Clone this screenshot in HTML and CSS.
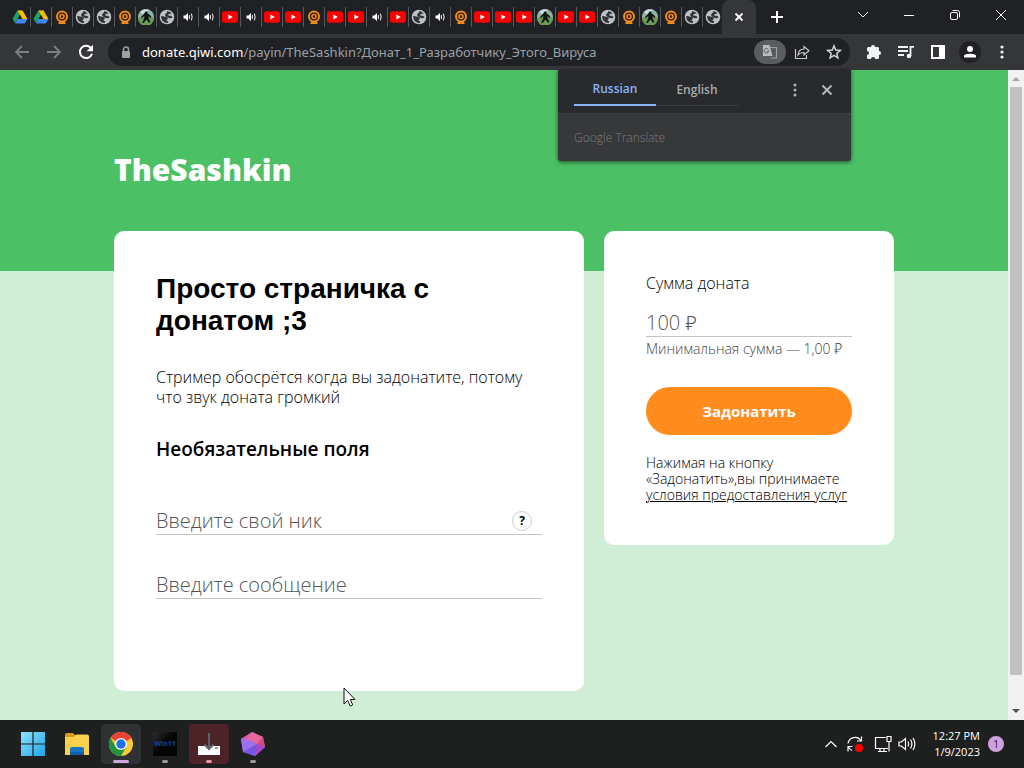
FILE: index.html
```html
<!DOCTYPE html>
<html lang="ru">
<head>
    <meta charset="UTF-8">
    <meta name="viewport" content="width=device-width, initial-scale=1.0">
    <title>TheSashkin</title>
    <link rel="stylesheet" href="styles.css">
</head>
<body>
    <!-- favicons used by the tabs -->
    <svg class="sprite" aria-hidden="true">
        <symbol id="drive" viewBox="0 0 16 16">
            <path d="M5.4 1.5h5.2L8 6z" fill="#188038"/>
            <path d="M5.4 1.5 8 6 3.2 14.2.5 9.8z" fill="#1ea362"/>
            <path d="M10.6 1.5 15.5 10h-5.2L5.4 1.5z" fill="#fbbc04"/>
            <path d="M5.6 10h9.9l-2.7 4.4H3.2z" fill="#4285f4"/>
            <path d="M8 6l2.3 4H5.6z" fill="#202124"/>
        </symbol>
        <symbol id="orange" viewBox="0 0 16 16">
            <path d="M5 12h6l.7 3H4.300z" fill="#ef8a1d"/>
            <circle cx="8" cy="7.5" r="5" fill="#2b1a0c" stroke="#ef8a1d" stroke-width="2"/>
            <circle cx="8" cy="7.5" r="2" fill="none" stroke="#ef8a1d" stroke-width="1.6"/>
        </symbol>
        <symbol id="globe" viewBox="0 0 16 16">
            <circle cx="8" cy="8" r="7.300" fill="#bdc1c6"/>
            <path d="M2.200 7c2.300-.2 3.300.8 5 1 2 .2 2.300 1.500.8 2.400-1 .6 0 1.800 1.200 1.800l-.4 1.800C5 14.300 2 11 2.200 7z" fill="#303236"/>
            <path d="M8 2.300c1.800-.2 3.800.8 4.900 2.400-1.700-.4-2 .7-3.300.6-1 0-.6 1.400.6 1.500 1.300 0 2.600.1 3.500 1.500-1.600 1.300-3.900 1.200-4.800-.1-1-.2-2.600-.5-2.700-1.800C6.100 5 6.800 4 8 3.700z" fill="#303236"/>
        </symbol>
        <symbol id="game" viewBox="0 0 16 16">
            <circle cx="8" cy="8" r="8" fill="#8fb3a4"/>
            <path d="M0 9c3-1 12-2 16 0a8 8 0 0 1-16 0z" fill="#6d9a58"/>
            <path d="M2 3a8 8 0 0 1 9-2L6 6z" fill="#c9dde0"/>
            <path d="M7.500 2.500h2v2L12 6l1.500 2.500-1 .5-2-2 .2 2.500 1.800 4h-1.800L8.500 10.500 5.500 14H4l2.200-4.500V7L4 9 3 8l3-3.200z" fill="#101612"/>
        </symbol>
        <symbol id="sound" viewBox="0 0 16 16">
            <path d="M2 6h2.500L8 2.500v11L4.500 10H2z" fill="#fff"/>
            <path d="M9.800 5.500v5M12.500 3.500q2 4.500 0 9" fill="none" stroke="#fff" stroke-width="1.300"/>
        </symbol>
        <symbol id="youtube" viewBox="0 0 16 16">
            <rect x="0" y="2.200" width="16" height="11.600" rx="2.500" fill="#f00"/>
            <path d="M6.400 5.500v5L10.800 8z" fill="#fff"/>
        </symbol>
    </svg>

    <div class="tabstrip">
        <div class="tabs" id="tabs"></div>
        <button class="tab-active" aria-label="Close tab">
            <svg width="10" height="10" viewBox="0 0 10 10"><path d="M1.500 1.500l7 7M8.500 1.500l-7 7" stroke="#fff" stroke-width="1.800"/></svg>
        </button>
        <button class="tab-new" aria-label="New tab">
            <svg width="14" height="14" viewBox="0 0 14 14"><path d="M7 1v12M1 7h12" stroke="#fff" stroke-width="2"/></svg>
        </button>
        <div class="window-buttons">
            <button aria-label="Search tabs"><svg width="12" height="12" viewBox="0 0 12 12"><path d="M1 3l5 5 5-5"/></svg></button>
            <button aria-label="Minimize"><svg width="12" height="12" viewBox="0 0 12 12"><path d="M1 6.500h10"/></svg></button>
            <button aria-label="Restore"><svg width="12" height="12" viewBox="0 0 12 12"><rect x="1.500" y="3.500" width="7" height="7" rx="1.500"/><path d="M3.500 1.500H8.500a2 2 0 0 1 2 2v5"/></svg></button>
            <button aria-label="Close"><svg width="12" height="12" viewBox="0 0 12 12"><path d="M1 1l10 10M11 1L1 11"/></svg></button>
        </div>
    </div>

    <div class="toolbar">
        <button class="tool" aria-label="Back"><svg width="16" height="16" viewBox="0 0 16 16"><path d="M15 8H2M8 2L2 8l6 6" fill="none" stroke="#7c7e82" stroke-width="1.800"/></svg></button>
        <button class="tool" aria-label="Forward"><svg width="16" height="16" viewBox="0 0 16 16"><path d="M1 8h13M8 2l6 6-6 6" fill="none" stroke="#7c7e82" stroke-width="1.800"/></svg></button>
        <button class="tool" aria-label="Reload"><svg width="16" height="16" viewBox="0 0 16 16"><path d="M13.300 4.500A6.200 6.200 0 1 0 14 9.800" fill="none" stroke="#fff" stroke-width="2"/><path d="M15 .8v6.400H8.600z" fill="#fff"/></svg></button>
        <div class="omnibox">
            <svg class="lock" width="10" height="13" viewBox="0 0 10 13"><path d="M2.500 5V3.500a2.500 2.500 0 0 1 5 0V5" fill="none" stroke="#9aa0a6" stroke-width="1.500"/><rect x="1" y="5" width="8" height="7" rx="1" fill="#9aa0a6"/></svg>
            <div class="url"><span class="host">donate.qiwi.com</span>/payin/TheSashkin?Донат_1_Разработчику_Этого_Вируса</div>
            <button class="tool pill" aria-label="Translate"><svg width="16" height="16" viewBox="0 0 16 16"><path d="M6 3.500h8.500v10.500H9" fill="none" stroke="#9da0a3" stroke-width="1.200"/><path d="M1 1h6.500l3 11H1z" fill="#b9bbbe"/><path d="M6.300 5.200A2.300 2.300 0 1 0 6.800 7H4.700M9.500 7h4M11.500 6v1M13 7q-1 3-3 4M10.500 8.500l2.500 3" fill="none" stroke="#55575a"/></svg></button>
            <button class="tool" aria-label="Share"><svg width="16" height="16" viewBox="0 0 16 16"><path d="M1.500 5v9.500h11V11M10 2.500V5C6 5.200 4.200 8 4 11c1.500-2 3.500-2.500 6-2.500V11l5-4.300z" fill="none" stroke="#c3c6c9" stroke-width="1.200"/></svg></button>
            <button class="tool" aria-label="Bookmark"><svg width="16" height="16" viewBox="0 0 16 16"><path d="M8 1.800l1.700 4.300 4.600.3-3.500 3 1.100 4.500L8 11.400l-3.900 2.500 1.100-4.500-3.500-3 4.600-.3z" fill="none" stroke="#d0d3d6" stroke-width="1.500"/></svg></button>
        </div>
        <button class="tool" aria-label="Extensions"><svg width="16" height="16" viewBox="0 0 16 16"><path d="M1 4.500A1.500 1.500 0 0 1 2.500 3H5a2 2 0 1 1 4 0h2.500A1.500 1.500 0 0 1 13 4.500V7a2 2 0 1 1 0 4v2.500a1.500 1.500 0 0 1-1.500 1.500H9.200a2.100 2.100 0 0 0-4.200 0H2.500A1.500 1.500 0 0 1 1 13.500V11a2 2 0 0 0 0-4z" fill="#f1f3f4"/></svg></button>
        <button class="tool" aria-label="Media"><svg width="18" height="16" viewBox="0 0 18 16"><path d="M1 3h10M1 7h10M1 11h6M13.500 12V2.800H17" fill="none" stroke="#f1f3f4" stroke-width="1.800"/><circle cx="12" cy="12" r="2.300" fill="#f1f3f4"/></svg></button>
        <button class="tool" aria-label="Side panel"><svg width="14" height="14" viewBox="0 0 14 14"><path d="M0 0h14v14H0zM2 2v10h6V2z" fill="#fff" fill-rule="evenodd"/></svg></button>
        <button class="tool" aria-label="Profile"><svg width="22" height="22" viewBox="0 0 22 22"><circle cx="11" cy="11" r="11" fill="#202124"/><circle cx="11" cy="8" r="3" fill="#fff"/><path d="M5 16.500V15c0-3 12-3 12 0v1.500z" fill="#fff"/></svg></button>
        <button class="tool" aria-label="Menu"><svg width="4" height="16" viewBox="0 0 4 16" fill="#f1f3f4"><circle cx="2" cy="3" r="1.600"/><circle cx="2" cy="8" r="1.600"/><circle cx="2" cy="13" r="1.600"/></svg></button>
    </div>

    <div class="viewport">
        <main class="page">
            <header class="hero">
                <div class="wrap"><h1>TheSashkin</h1></div>
            </header>
            <form class="wrap cards">
                <section class="card card-main">
                    <h2>Просто страничка с донатом ;3</h2>
                    <p class="about">Стример обосрётся когда вы задонатите, потому что звук доната громкий</p>
                    <h3>Необязательные поля</h3>
                    <div class="field">
                        <input type="text" aria-label="Введите свой ник" placeholder="Введите свой ник">
                        <button type="button" class="help">?</button>
                    </div>
                    <div class="field">
                        <input type="text" aria-label="Введите сообщение" placeholder="Введите сообщение">
                    </div>
                </section>
                <section class="card card-pay">
                    <label for="sum">Сумма доната</label>
                    <div class="field">
                        <input type="text" id="sum" placeholder="100 ₽">
                    </div>
                    <div class="hint">Минимальная сумма — 1,00 ₽</div>
                    <button type="button" class="donate">Задонатить</button>
                    <p class="terms">Нажимая на кнопку «Задонатить»,вы принимаете <a href="#">условия предоставления услуг</a></p>
                </section>
            </form>
        </main>
        <div class="scrollbar">
            <svg width="8" height="16" viewBox="0 0 8 16"><path d="M0 10l4-4 4 4z" fill="#a3a3a3"/></svg>
            <div class="thumb"></div>
            <svg width="8" height="16" viewBox="0 0 8 16"><path d="M0 6l4 4 4-4z" fill="#505050"/></svg>
        </div>

        <div class="translate">
            <div class="translate-top">
                <button class="lang lang-on">Russian</button>
                <button class="lang">English</button>
                <button class="tool translate-menu" aria-label="Options"><svg width="4" height="16" viewBox="0 0 4 16" fill="#b0b3b6"><circle cx="2" cy="3" r="1.500"/><circle cx="2" cy="8" r="1.500"/><circle cx="2" cy="13" r="1.500"/></svg></button>
                <button class="tool" aria-label="Close"><svg width="12" height="12" viewBox="0 0 12 12"><path d="M1.500 1.500l9 9M10.500 1.500l-9 9" stroke="#b8bbbe" stroke-width="1.800"/></svg></button>
            </div>
            <div class="translate-name">Google Translate</div>
        </div>

        <svg class="cursor" width="13" height="21" viewBox="0 0 13 21"><path d="M1 1v16l3.700-3.600L7.200 19l2.500-1.100-2.400-5.400H12z" fill="#fff" stroke="#111" stroke-width="1"/></svg>
    </div>

    <footer class="taskbar">
        <button class="app" aria-label="Start">
            <svg width="24" height="24" viewBox="0 0 24 24"><defs><linearGradient id="win" x2="1" y2="1"><stop stop-color="#8be4fb"/><stop offset="1" stop-color="#20a3e8"/></linearGradient></defs><path d="M0 0h11.400v11.400H0zM12.600 0H24v11.400H12.600zM0 12.600h11.400V24H0zM12.600 12.600H24V24H12.600z" fill="url(#win)"/></svg>
        </button>
        <button class="app" aria-label="Explorer">
            <svg width="26" height="24" viewBox="0 0 26 24"><path d="M1 3a2 2 0 0 1 2-2h6l3 3h-2v5H1z" fill="#d99a1c"/><path d="M1 5h8.500L12 2.500h11a2 2 0 0 1 2 2V23H1z" fill="#fbd04a"/><path d="M6 23v-6a2 2 0 0 1 2-2h10a2 2 0 0 1 2 2v6z" fill="#1976c4"/><path d="M6 20h14v3H6z" fill="#0f5fa8"/></svg>
        </button>
        <button class="app app-open" aria-label="Chrome">
            <svg width="24" height="24" viewBox="0 0 24 24"><circle cx="12" cy="12" r="12" fill="#fcc934"/><path d="M12 12L1.600 6A12 12 0 0 1 22.400 6z" fill="#ea4335"/><path d="M12 6h10.400L12 12z" fill="#ea4335"/><path d="M1.600 6A12 12 0 0 0 12 24l5.200-9L12 12 6.800 15z" fill="#229342"/><circle cx="12" cy="12" r="6" fill="#fff"/><circle cx="12" cy="12" r="4.700" fill="#1a73e8"/></svg>
            <span class="mark mark-wide"></span>
        </button>
        <button class="app" aria-label="Win11">
            <svg width="24" height="24" viewBox="0 0 24 24"><defs><linearGradient id="dark" x2="1" y2="1"><stop stop-color="#2c2c2e"/><stop offset=".5" stop-color="#050506"/></linearGradient></defs><rect width="24" height="24" fill="url(#dark)"/><text class="app-text" x="12" y="14" text-anchor="middle">Win11</text></svg>
            <span class="mark"></span>
        </button>
        <button class="app app-alert" aria-label="Installer">
            <svg width="24" height="24" viewBox="0 0 24 24"><path d="M1 14h22v9H1z" fill="#fff"/><path d="M12 1v15M7.500 12.500L12 17l4.500-4.500" fill="none" stroke="#5b6068" stroke-width="2"/><path d="M18 16h3" stroke="#333"/></svg>
            <span class="mark mark-pink"></span>
        </button>
        <button class="app" aria-label="Game">
            <svg width="26" height="26" viewBox="0 0 26 26"><path d="M12 1l11 5 2 10-10 9L3 21 1 8z" fill="#bb5bc8"/><path d="M12 1l11 5-6 7L6 8z" fill="#e6689c"/><path d="M23 6l2 10-8-3z" fill="#d74b7c"/><path d="M1 8l5 0 11 5-14 8z" fill="#9873ed"/><path d="M3 21l14-8-2 12z" fill="#7655e0"/><path d="M17 13l8 3-10 9z" fill="#a64ac9"/><path d="M12 1L6 8H1z" fill="#d85ba8"/></svg>
            <span class="mark"></span>
        </button>
        <div class="tray">
            <svg width="24" height="20" viewBox="0 0 24 20"><path d="M6.500 13L12 7.500l5.500 5.500"/></svg>
            <svg width="24" height="20" viewBox="0 0 24 20"><path d="M5 9.500a7.200 7.200 0 0 1 13-3M18.500 2.500v4.500H14M9 16.500a8 8 0 0 1-3.500-3.500M5 17.500v-5h4.500"/><circle cx="16" cy="14" r="4" fill="#f00" stroke="none"/></svg>
            <svg class="net" width="24" height="20" viewBox="0 0 24 20"><path d="M14.500 3.500h-10v11h12.500M7 17.500h9M9 14.500v3M13 14.500v3M16 2.500h4v5h-4zM18 7.500V17.500"/></svg>
            <svg width="24" height="20" viewBox="0 0 24 20"><path d="M4 8v4h2.500l4 3.500v-11L6.500 8zM13 7.500q1.500 2.500 0 5M15.500 5.500q2.800 4.500 0 9M18 4q3.800 6 0 12"/></svg>
            <div class="clock">12:27 PM<br>1/9/2023</div>
            <span class="badge">1</span>
        </div>
    </footer>

    <script src="script.js"></script>
</body>
</html>
```

FILE: styles.css
```css
* {
    box-sizing: border-box;
}

body {
    margin: 0;
    height: 100vh;
    display: flex;
    flex-direction: column;
    overflow: hidden;
    font-family: "Open Sans", "Noto Sans", sans-serif;
    color: #000;
}

h1, h2, h3, p {
    margin: 0;
}

button {
    border: 0;
    padding: 0;
    background: none;
    font-family: inherit;
    color: inherit;
    display: flex;
    align-items: center;
    justify-content: center;
}

.sprite {
    position: absolute;
    width: 0;
    height: 0;
}

/* tabs */
.tabstrip {
    flex: none;
    height: 34px;
    background: #202124;
    display: flex;
}

.tabs {
    display: flex;
    align-items: center;
    padding-left: 10px;
}

.tab {
    width: 21px;
    height: 20px;
    border-right: 1px solid #55585c;
}

.tab:last-child {
    border-right-color: transparent;
}

.tab-active {
    width: 34px;
    margin-left: -2px;
    background: #35363a;
    border-radius: 8px 8px 0 0;
}

.tab-new {
    width: 42px;
}

.window-buttons {
    margin-left: auto;
    display: flex;
    height: 29px;
}

.window-buttons button {
    width: 46px;
}

.window-buttons svg {
    fill: none;
    stroke: #fff;
}

/* address bar */
.toolbar {
    flex: none;
    height: 36px;
    padding: 0 6px;
    background: #35363a;
    display: flex;
    align-items: center;
}

.tool {
    flex: none;
    width: 32px;
    height: 24px;
}

.omnibox {
    flex: 1;
    min-width: 0;
    height: 28px;
    margin: 0 8px 0 6px;
    border-radius: 14px;
    background: #202124;
    display: flex;
    align-items: center;
}

.lock {
    flex: none;
    margin: 0 11px 0 13px;
}

.url {
    flex: 1;
    overflow: hidden;
    white-space: nowrap;
    font-family: "Noto Sans", sans-serif;
    font-size: 13px;
    color: #9aa0a6;
}

.host {
    color: #fff;
}

.pill {
    border-radius: 12px;
    background: #5a5c5e;
}

/* page */
.viewport {
    position: relative;
    flex: 1;
    min-height: 0;
    display: flex;
}

.page {
    flex: 1;
    overflow: hidden;
    background: #d0eed5;
}

.wrap {
    max-width: 780px;
    margin: 0 auto;
}

.hero {
    height: 201px;
    padding-top: 80px;
    background: #4bc065;
}

.hero h1 {
    font-size: 30px;
    line-height: 40px;
    font-weight: 800;
    color: #fff;
}

.cards {
    margin-top: -40px;
    display: grid;
    grid-template-columns: minmax(0, 47fr) minmax(0, 29fr);
    gap: 20px;
    align-items: start;
}

.card {
    padding: 42px;
    border-radius: 10px;
    background: #fff;
}

.card-main {
    min-height: 460px;
}

.card h2 {
    font-family: "Liberation Sans", Arial, sans-serif;
    font-size: 28px;
    line-height: 32px;
}

.about {
    margin-top: 30px;
    font-size: 16px;
    line-height: 20px;
    font-weight: 300;
}

.card h3 {
    margin: 30px 0 46px;
    font-size: 19px;
    line-height: 24px;
    font-weight: 600;
}

.field {
    display: flex;
    align-items: center;
    height: 28px;
    border-bottom: 1px solid #c4c4c4;
}

.field + .field {
    margin-top: 36px;
}

.field input {
    flex: 1;
    min-width: 0;
    padding: 0;
    border: 0;
    outline: 0;
    background: none;
    font-family: inherit;
    font-size: 20px;
    font-weight: 300;
}

.field input::placeholder {
    color: #555;
}

.help {
    width: 20px;
    height: 20px;
    margin-right: 10px;
    border: 1px solid #d0d0d0;
    border-radius: 50%;
    font-size: 12px;
    font-weight: 700;
}

.card-pay label {
    display: block;
    margin-bottom: 16px;
    font-size: 16px;
    line-height: 20px;
    font-weight: 300;
}

.hint {
    margin-top: 4px;
    font-size: 14px;
    line-height: 16px;
    font-weight: 300;
    color: #444;
    white-space: nowrap;
}

.donate {
    width: 100%;
    height: 48px;
    margin: 30px 0 20px;
    border-radius: 24px;
    background: #ff8c1d;
    color: #fff;
    font-size: 15px;
    font-weight: 700;
}

.terms {
    font-size: 14px;
    line-height: 16px;
    font-weight: 300;
}

.terms a {
    display: inline-block;
    color: inherit;
    white-space: nowrap;
}

.scrollbar {
    flex: none;
    width: 16px;
    padding: 1px 0;
    background: #f1f1f1;
    display: flex;
    flex-direction: column;
    align-items: center;
}

.thumb {
    flex: 1;
    width: 12px;
    margin-bottom: 28px;
    background: #c1c1c1;
}

/* translate popup */
.translate {
    position: absolute;
    top: 0;
    right: 173px;
    width: 293px;
    background: #37383a;
    border-radius: 0 0 3px 3px;
    box-shadow: 0 1px 4px rgba(0, 0, 0, 0.6);
    font-size: 12px;
}

.translate-top {
    height: 44px;
    padding: 0 8px 4px 16px;
    background: #292a2d;
    border-bottom: 1px solid #3f4043;
    display: flex;
    align-items: center;
}

.lang {
    width: 82px;
    height: 32px;
    border-bottom: 1px solid #3c3d40;
    color: #a8abae;
    font-size: 12px;
    font-weight: 600;
}

.lang-on {
    border-bottom: 2px solid #8ab4f8;
    color: #8ab4f8;
}

.translate-menu {
    margin-left: auto;
}

.translate-name {
    padding: 15px 16px 14px;
    line-height: 18px;
    font-weight: 300;
    color: #7a7b7e;
}

.cursor {
    position: absolute;
    top: 617px;
    left: 343px;
}

/* taskbar */
.taskbar {
    flex: none;
    height: 48px;
    padding: 0 20px 0 13px;
    background: #1e1f1f;
    color: #fff;
    display: flex;
    align-items: center;
    gap: 4px;
}

.app {
    position: relative;
    width: 40px;
    height: 40px;
    border-radius: 4px;
}

.app-open {
    background: #303132;
}

.app-alert {
    background: #4c2428;
}

.app-text {
    font-size: 7px;
    font-weight: 700;
    fill: #1243a8;
}

.mark {
    position: absolute;
    bottom: 1px;
    left: 17px;
    width: 6px;
    height: 3px;
    border-radius: 2px;
    background: #9a9a9a;
}

.mark-wide {
    left: 12px;
    width: 16px;
    background: #d3a6e2;
}

.mark-pink {
    background: #e69aa4;
}

.tray {
    margin-left: auto;
    display: flex;
    align-items: center;
}

.tray svg {
    fill: none;
    stroke: #fff;
    stroke-width: 1.2;
}

.tray .net {
    margin-left: 4px;
}

.clock {
    margin-left: 14px;
    font-size: 11px;
    line-height: 16px;
    text-align: right;
}

.badge {
    width: 16px;
    height: 16px;
    margin: 0 0 0 8px;
    border-radius: 50%;
    background: #d0a0e0;
    color: #222;
    font-size: 10px;
    line-height: 16px;
    text-align: center;
}
```

FILE: script.js
```js
const icons = [
    'drive', 'drive', 'orange', 'globe', 'globe', 'orange', 'game', 'globe',
    'sound', 'sound', 'youtube', 'sound', 'youtube', 'youtube', 'orange',
    'youtube', 'youtube', 'sound', 'youtube', 'globe', 'sound', 'orange',
    'youtube', 'youtube', 'youtube', 'game', 'youtube', 'youtube', 'globe',
    'orange', 'game', 'orange', 'globe', 'globe'
];

const tabs = document.getElementById('tabs');

for (let i = 0; i < icons.length; i++) {
    const size = icons[i] === 'sound' ? 12 : 16;
    const tab = document.createElement('button');
    tab.classList.add('tab');
    tab.setAttribute('aria-label', 'Tab ' + (i + 1));
    tab.innerHTML = `<svg width="${size}" height="${size}"><use href="#${icons[i]}"/></svg>`;
    tabs.appendChild(tab);
}
```
